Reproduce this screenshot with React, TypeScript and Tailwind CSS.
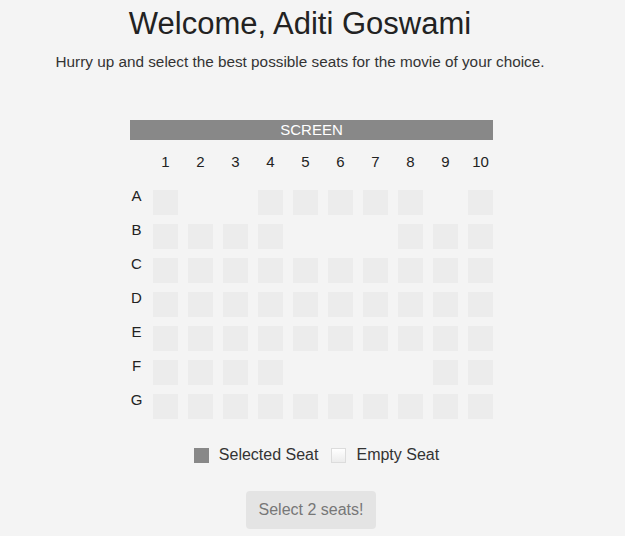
import React from 'react';

const cols = [1, 2, 3, 4, 5, 6, 7, 8, 9, 10];

const rows: { label: string; seats: number[] }[] = [
  { label: 'A', seats: [1, 4, 5, 6, 7, 8, 10] },
  { label: 'B', seats: [1, 2, 3, 4, 8, 9, 10] },
  { label: 'C', seats: cols },
  { label: 'D', seats: cols },
  { label: 'E', seats: cols },
  { label: 'F', seats: [1, 2, 3, 4, 9, 10] },
  { label: 'G', seats: cols },
];

const App = () => {
  return (
    <div className="min-h-[536px] bg-[#f4f4f4] font-['Liberation_Sans',Arial,sans-serif] text-[#222] pt-[6px]">
      <div className="w-[600px] text-center">
        <h1 className="text-[31px] leading-[36px] font-normal text-[#222]">Welcome, Aditi Goswami</h1>
        <p className="mt-[10px] text-[15.3px] leading-[20px] text-[#333]">
          Hurry up and select the best possible seats for the movie of your choice.
        </p>
      </div>

      <div className="flex justify-center pr-[2px] mt-[48px]">
        <div className="w-[363px]">
          <div className="h-[20px] bg-[#888888] text-white text-[15px] leading-[20px] text-center">SCREEN</div>

          <div className="grid grid-cols-[13px_repeat(10,25px)] gap-x-[10px] mt-[12px] text-[15px] leading-[20px] text-[#222]">
            <div />
            {cols.map((c) => (
              <div key={c} className="text-center whitespace-nowrap">{c}</div>
            ))}
          </div>

          <div className="grid grid-cols-[13px_repeat(10,25px)] gap-x-[10px] gap-y-[9px] mt-[18px]">
            {rows.map((row) => (
              <React.Fragment key={row.label}>
                <div className="text-[15px] leading-[11px] text-center text-[#222] h-[25px]">{row.label}</div>
                {cols.map((c) =>
                  row.seats.includes(c) ? (
                    <div key={c} className="h-[25px] bg-[#ececec]" />
                  ) : (
                    <div key={c} className="h-[25px]" />
                  )
                )}
              </React.Fragment>
            ))}
          </div>
        </div>
      </div>

      <div className="flex justify-center items-center pl-[8px] mt-[27px] text-[16px] leading-[18px] text-[#333]">
        <span className="w-[15px] h-[15px] bg-[#888888]" />
        <span className="ml-[10px]">Selected Seat</span>
        <span className="ml-[13px] w-[15px] h-[15px] border border-[#dcdcdc] bg-gradient-to-b from-white to-[#ececec]" />
        <span className="ml-[10px]">Empty Seat</span>
      </div>

      <div className="flex justify-center pr-[3px] mt-[27px]">
        <button className="w-[130px] py-[10px] rounded-[4px] bg-[#e4e4e4] text-[#777] text-[16px] leading-[18px]">
          Select 2 seats!
        </button>
      </div>
    </div>
  );
};

export default App;
